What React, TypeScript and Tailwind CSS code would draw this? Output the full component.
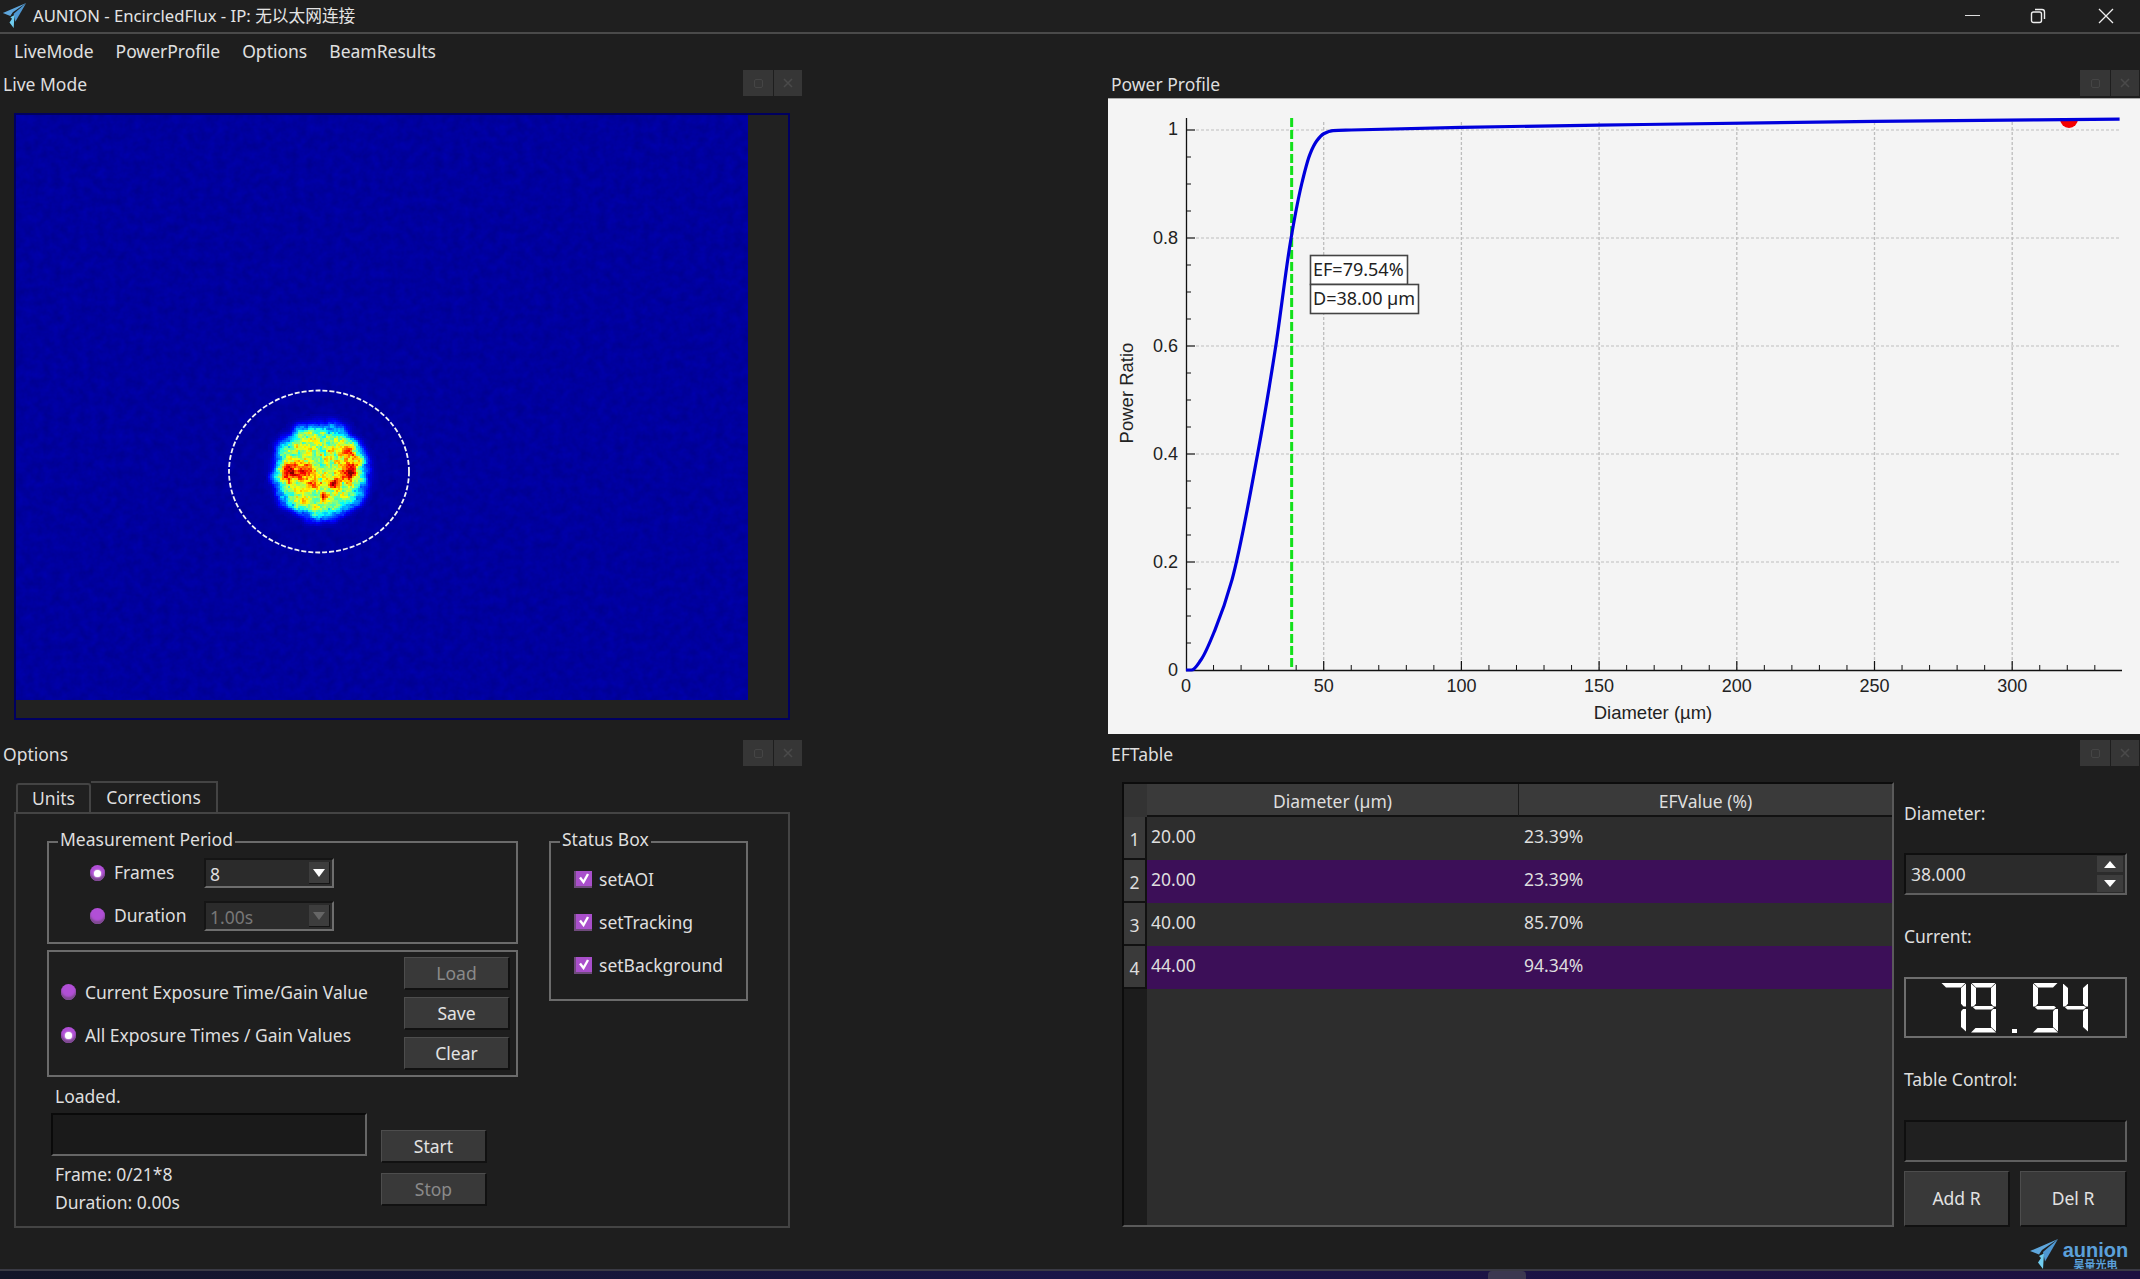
import { useMemo } from 'react'

const jet = (v: number) => {
  const c = (x: number) => Math.max(0, Math.min(1, x))
  const r = c(1.5 - Math.abs(4 * v - 3))
  const g = c(1.5 - Math.abs(4 * v - 2))
  const b = c(1.5 - Math.abs(4 * v - 1))
  return `rgb(${Math.round(r * 255)},${Math.round(g * 255)},${Math.round(b * 255)})`
}

function makeNoise(seed: number, size: number) {
  let s = seed
  const rand = () => {
    s = (s * 16807) % 2147483647
    return s / 2147483647
  }
  const grid: number[] = []
  for (let i = 0; i < size * size; i++) grid.push(rand())
  return (x: number, y: number) => {
    const x0 = Math.floor(x)
    const y0 = Math.floor(y)
    const fx = x - x0
    const fy = y - y0
    const at = (a: number, b: number) => grid[((a + size) % size) + ((b + size) % size) * size]
    const sx = fx * fx * (3 - 2 * fx)
    const sy = fy * fy * (3 - 2 * fy)
    const top = at(x0, y0) * (1 - sx) + at(x0 + 1, y0) * sx
    const bot = at(x0, y0 + 1) * (1 - sx) + at(x0 + 1, y0 + 1) * sx
    return top * (1 - sy) + bot * sy
  }
}

// hot spots of the beam, in page coordinates
const hot = [
  [288, 472, 0.42, 6],
  [303, 470, 0.4, 5],
  [350, 470, 0.44, 6],
  [347, 450, 0.32, 5],
  [358, 458, 0.22, 4],
  [313, 483, 0.28, 3.5],
  [333, 482, 0.32, 4],
  [323, 495, 0.36, 2.5],
  [303, 500, 0.22, 2.5],
]

function BeamCells() {
  const cells = useMemo(() => {
    const noise = makeNoise(4217, 64)
    const noise2 = makeNoise(991, 64)
    const noise3 = makeNoise(2203, 64)
    const out: { x: number; y: number; fill: string }[] = []
    const step = 2
    for (let py = 408; py < 534; py += step) {
      for (let px = 256; px < 384; px += step) {
        const wobble = 0.12 * (noise3(px / 9, py / 9) - 0.5)
        const r = Math.hypot(px - 319, py - 470.5) / 49 + wobble
        if (r > 1.16) continue
        const edge = Math.max(0, Math.min(1, (1.14 - r) / 0.46))
        const prof = edge * edge * (3 - 2 * edge)
        let v = 0.3 + 0.3 * noise(px / 3.6, py / 3.6) + 0.16 * noise2(px / 2, py / 2)
        for (const [hx, hy, amp, w] of hot) {
          v += amp * Math.exp(-((px - hx) ** 2 + (py - hy) ** 2) / (2 * w * w))
        }
        const val = 0.04 + prof * Math.min(1, v) * 0.96
        out.push({ x: px - 16, y: py - 115, fill: jet(val) })
      }
    }
    return out
  }, [])
  return (
    <g filter="url(#soft)">
      {cells.map((c, i) => (
        <rect key={i} x={c.x} y={c.y} width="2.2" height="2.2" fill={c.fill} />
      ))}
    </g>
  )
}

function LiveImage() {
  return (
    <svg width="732" height="585" className="block shrink-0">
      <defs>
        <filter id="grain" x="0" y="0" width="100%" height="100%" colorInterpolationFilters="sRGB">
          <feTurbulence type="fractalNoise" baseFrequency="0.11" numOctaves="3" seed="8" />
          <feColorMatrix values="0 0 0 0 0  0 0 0 0 0  0.14 0 0 0 0.55  0 0 0 0 1" />
        </filter>
        <filter id="soft" colorInterpolationFilters="sRGB">
          <feGaussianBlur stdDeviation="0.7" />
        </filter>
      </defs>
      <rect width="732" height="585" filter="url(#grain)" />
      <BeamCells />
      <ellipse cx="303" cy="356.5" rx="90" ry="81" fill="none" stroke="#f4f4f4" strokeWidth="1.8" strokeDasharray="5 2" />
    </svg>
  )
}

const curve = [
  [0, 0], [2, 0], [5.4, 0.0185], [10.5, 0.074], [16.7, 0.167], [26, 0.4], [32.6, 0.6], [38, 0.795],
  [42, 0.9], [45, 0.955], [47.5, 0.98], [50, 0.993], [53.4, 0.999], [60, 1.0], [100, 1.005], [150, 1.009], [250, 1.016], [339, 1.02],
]

const X = (d: number) => 78 + 2.754 * d
const Y = (v: number) => 572 - 540 * v

// monotone cubic through the read-off points
function curvePath() {
  const n = curve.length
  const sec: number[] = []
  for (let i = 0; i < n - 1; i++) sec.push((curve[i + 1][1] - curve[i][1]) / (curve[i + 1][0] - curve[i][0]))
  const m: number[] = [sec[0]]
  for (let i = 1; i < n - 1; i++) {
    const h0 = curve[i][0] - curve[i - 1][0]
    const h1 = curve[i + 1][0] - curve[i][0]
    const a = sec[i - 1]
    const b = sec[i]
    m.push(a * b <= 0 ? 0 : (3 * (h0 + h1)) / ((2 * h1 + h0) / a + (h1 + 2 * h0) / b))
  }
  m.push(sec[n - 2])
  let out = `M${X(0)} ${Y(0)}`
  for (let i = 0; i < n - 1; i++) {
    const h = curve[i + 1][0] - curve[i][0]
    const c1x = curve[i][0] + h / 3
    const c1y = curve[i][1] + (m[i] * h) / 3
    const c2x = curve[i + 1][0] - h / 3
    const c2y = curve[i + 1][1] - (m[i + 1] * h) / 3
    out += ` C${X(c1x)} ${Y(c1y)} ${X(c2x)} ${Y(c2y)} ${X(curve[i + 1][0])} ${Y(curve[i + 1][1])}`
  }
  return out
}

function PowerChart() {
  const xMajor = [50, 100, 150, 200, 250, 300]
  const xMinor = Array.from({ length: 33 }, (_, i) => (i + 1) * 10).filter(d => d % 50 !== 0)
  const yMajor = [0.2, 0.4, 0.6, 0.8, 1]
  const yMinor = [0.05, 0.1, 0.15, 0.25, 0.3, 0.35, 0.45, 0.5, 0.55, 0.65, 0.7, 0.75, 0.85, 0.9, 0.95]
  const axisText = "font-['Liberation_Sans',sans-serif] text-[18px] fill-[#222]"
  return (
    <svg width="1032" height="636" className="block bg-[#f4f4f4]">
      <line x1="0" x2="1032" y1="0.5" y2="0.5" stroke="#aaa" />
      {xMajor.map(d => (
        <line key={d} x1={X(d)} x2={X(d)} y1="24" y2="572" stroke="#bdbdbd" strokeWidth="1.3" strokeDasharray="3 2" />
      ))}
      {yMajor.map(v => (
        <line key={v} x1="88" x2="1012" y1={Y(v)} y2={Y(v)} stroke="#bdbdbd" strokeWidth="1.1" strokeDasharray="3 2" />
      ))}
      <path d="M78.5 20V572.5H1014" fill="none" stroke="#111" strokeWidth="1.3" />
      {yMajor.map(v => (
        <line key={v} x1="78" x2="87" y1={Y(v)} y2={Y(v)} stroke="#111" strokeWidth="1.2" />
      ))}
      {yMinor.map(v => (
        <line key={v} x1="78" x2="83" y1={Y(v)} y2={Y(v)} stroke="#111" strokeWidth="1" />
      ))}
      {xMajor.map(d => (
        <line key={d} x1={X(d)} x2={X(d)} y1="563" y2="572" stroke="#111" strokeWidth="1.2" />
      ))}
      {xMinor.map(d => (
        <line key={d} x1={X(d)} x2={X(d)} y1="567" y2="572" stroke="#111" strokeWidth="1" />
      ))}
      <line x1={X(38) + 1} x2={X(38) + 1} y1="20" y2="572" stroke="#12e01a" strokeWidth="3" strokeDasharray="9 3" />
      <path d="M952 21a9 9 0 0 0 18 0z" fill="#f40000" />
      <path d={curvePath()} fill="none" stroke="#0000dc" strokeWidth="3.2" />
      {['1', '0.8', '0.6', '0.4', '0.2', '0'].map((t, i) => (
        <text key={t} x="70" y={Y(1 - i * 0.2) + (i === 0 ? 5 : 6)} textAnchor="end" className={axisText}>
          {t}
        </text>
      ))}
      {[0, 50, 100, 150, 200, 250, 300].map(d => (
        <text key={d} x={X(d)} y="594" textAnchor="middle" className={axisText}>
          {d}
        </text>
      ))}
      <text x="545" y="621" textAnchor="middle" className="font-['Liberation_Sans',sans-serif] text-[18.5px] fill-[#222]">
        Diameter (µm)
      </text>
      <text transform="translate(25 295) rotate(-90)" textAnchor="middle" className="font-['Liberation_Sans',sans-serif] text-[18.5px] fill-[#222]">
        Power Ratio
      </text>
      <rect x="202.5" y="157.5" width="97" height="29" fill="#fff" stroke="#444" strokeWidth="1.6" />
      <text x="205" y="178" className="text-[18px] fill-[#222]">
        EF=79.54%
      </text>
      <rect x="202.5" y="186.5" width="108" height="29" fill="#fff" stroke="#444" strokeWidth="1.6" />
      <text x="205" y="207" className="text-[18px] fill-[#222]">
        D=38.00 µm
      </text>
    </svg>
  )
}

function DockHeader({ title, inset = 'pl-[3px]', end = 'pr-0' }: { title: string; inset?: string; end?: string }) {
  return (
    <div className={`h-[30px] flex items-center justify-between ${inset} ${end}`}>
      <span className="pt-[2px] text-[#dedede]">{title}</span>
      <div className="flex gap-[1px]">
        <div className="w-[30px] h-[26px] bg-[#363636] flex items-center justify-center">
          <div className="w-[9px] h-[9px] border border-[#454545] rounded-[2px]" />
        </div>
        <div className="w-[28px] h-[26px] bg-[#363636] flex items-center justify-center">
          <svg width="12" height="12" viewBox="0 0 12 12" stroke="#4a4a4a" strokeWidth="1.6">
            <path d="M2 2l8 8M10 2l-8 8" />
          </svg>
        </div>
      </div>
    </div>
  )
}

function Radio({ checked }: { checked?: boolean }) {
  return (
    <span className="w-[15px] h-[16px] rounded-full bg-[#b14fd6] shadow-[inset_0_-3px_2px_#7d4a8f] flex items-center justify-center shrink-0">
      {checked && <span className="w-[7px] h-[7px] rounded-full bg-white shadow-[0_0_2px_#fff]" />}
    </span>
  )
}

function Check({ label }: { label: string }) {
  return (
    <div className="h-[24px] flex items-center gap-[7px]">
      <span className="w-[18px] h-[17px] bg-[#a94fcb] border-b-2 border-l-2 border-[#6f4a7d] flex items-center justify-center shrink-0">
        <svg width="12" height="12" viewBox="0 0 12 12" fill="none" stroke="#fff" strokeWidth="2.4">
          <path d="M2 5.5l3.5 4.5L10 2" />
        </svg>
      </span>
      <span>{label}</span>
    </div>
  )
}

function Combo({ value, disabled }: { value: string; disabled?: boolean }) {
  return (
    <div className="w-[130px] h-[30px] bg-[#2b2b2b] border-2 border-t-[#151515] border-l-[#151515] border-r-[#6e6e6e] border-b-[#6e6e6e] flex items-center justify-between pr-[2px]">
      <span className={`pl-[4px] pt-[2px] ${disabled ? 'text-[#777]' : 'text-[#dedede]'}`}>{value}</span>
      <span className="w-[21px] h-[22px] bg-[#3d3d3d] border-r border-b border-[#151515] flex items-center justify-center">
        <svg width="12" height="8" viewBox="0 0 12 8">
          <path d="M0 0h12L6 8z" fill={disabled ? '#666' : '#fff'} />
        </svg>
      </span>
    </div>
  )
}

function Btn({ label, disabled, className = 'w-[106px] h-[33px]' }: { label: string; disabled?: boolean; className?: string }) {
  return (
    <div className={`${className} bg-[#393939] border-t border-l border-[#4d4d4d] border-r-2 border-b-2 border-r-[#111] border-b-[#111] flex items-center justify-center ${disabled ? 'text-[#8a8a8a]' : 'text-[#e2e2e2]'}`}>
      {label}
    </div>
  )
}

function Legend({ title }: { title: string }) {
  return <legend className="ml-[9px] px-[2px] h-[24px] leading-[18px] text-[#dedede]">{title}</legend>
}

function OptionsPanel() {
  return (
    <div className="pl-[14px]">
      <div className="mt-[14px] pl-[2px] flex items-end h-[30px]">
        <div className="w-[75px] h-[29px] bg-[#202020] border-2 border-b-0 border-[#444] rounded-t-[3px] flex items-center justify-center text-[#dedede]">
          Units
        </div>
        <div className="w-[127px] h-[31px] bg-[#1e1e1e] border-t-2 border-r-2 border-[#444] flex items-center justify-center text-[#dedede]">
          Corrections
        </div>
      </div>
      <div className="w-[776px] h-[416px] border-2 border-[#444] flex pl-[31px] pt-[16px] gap-[31px] text-[#dedede]">
        <div className="w-[471px] flex flex-col">
          <fieldset className="h-[114px] border-2 border-[#6b6b6b]">
            <Legend title="Measurement Period" />
            <div className="pl-[41px] pt-[4px] flex flex-col gap-[13px]">
              <div className="flex items-center h-[30px]">
                <Radio checked />
                <span className="ml-[9px] w-[90px] -mt-[2px]">Frames</span>
                <Combo value="8" />
              </div>
              <div className="flex items-center h-[30px]">
                <Radio />
                <span className="ml-[9px] w-[90px] -mt-[2px]">Duration</span>
                <Combo value="1.00s" disabled />
              </div>
            </div>
          </fieldset>
          <div className="mt-[6px] h-[127px] border-2 border-[#6b6b6b] flex items-center justify-between pl-[12px] pr-[6px]">
            <div className="flex flex-col gap-[19px]">
              <div className="h-[24px] flex items-center gap-[9px]">
                <Radio />
                <span>Current Exposure Time/Gain Value</span>
              </div>
              <div className="h-[24px] flex items-center gap-[9px]">
                <Radio checked />
                <span>All Exposure Times / Gain Values</span>
              </div>
            </div>
            <div className="flex flex-col gap-[7px]">
              <Btn label="Load" disabled />
              <Btn label="Save" />
              <Btn label="Clear" />
            </div>
          </div>
          <div className="mt-[7px] pl-[4px] flex">
            <div className="w-[316px]">
              <div className="h-[24px] pl-[4px] leading-[24px]">Loaded.</div>
              <div className="mt-[5px] h-[43px] bg-[#1a1a1a] border-2 border-t-[#0a0a0a] border-l-[#0a0a0a] border-r-[#666] border-b-[#666]" />
              <div className="mt-[6px] h-[24px] pl-[4px] leading-[24px]">Frame: 0/21*8</div>
              <div className="mt-[4px] h-[24px] pl-[4px] leading-[24px]">Duration: 0.00s</div>
            </div>
            <div className="ml-[14px] pt-[46px] flex flex-col gap-[10px]">
              <Btn label="Start" />
              <Btn label="Stop" disabled />
            </div>
          </div>
        </div>
        <fieldset className="w-[199px] h-[171px] border-2 border-[#6b6b6b]">
          <Legend title="Status Box" />
          <div className="pl-[23px] pt-[13px] flex flex-col gap-[19px]">
            <Check label="setAOI" />
            <Check label="setTracking" />
            <Check label="setBackground" />
          </div>
        </fieldset>
      </div>
    </div>
  )
}

const rows = [
  ['20.00', '23.39%'],
  ['20.00', '23.39%'],
  ['40.00', '85.70%'],
  ['44.00', '94.34%'],
]

function EFTable() {
  return (
    <div className="w-[772px] h-[445px] bg-[#2d2d2d] border-2 border-t-[#0c0c0c] border-l-[#0c0c0c] border-r-[#5a5a5a] border-b-[#5a5a5a] flex flex-col">
      <div className="flex h-[33px] shrink-0 text-[#dedede]">
        <div className="w-[23px] bg-[#333]" />
        <div className="w-[372px] pt-[3px] bg-[#3a3a3a] border-r border-b-2 border-r-[#1a1a1a] border-b-[#111] flex items-center justify-center">
          Diameter (µm)
        </div>
        <div className="flex-1 pt-[3px] bg-[#3a3a3a] border-b-2 border-[#111] flex items-center justify-center">EFValue (%)</div>
      </div>
      <div className="flex-1 flex flex-col">
        {rows.map((r, i) => (
          <div key={i} className="flex h-[43px] shrink-0">
            <div className="w-[23px] bg-[#3a3a3a] border-b-2 border-r-2 border-[#111] flex items-center justify-center pt-[4px] text-[#dedede]">
              {i + 1}
            </div>
            <div className={`flex flex-1 ${i % 2 === 1 ? 'bg-[#3c0f58]' : 'bg-[#2d2d2d]'}`}>
              <div className="w-[372px] pl-[4px] pb-[4px] flex items-center text-[#dedede]">{r[0]}</div>
              <div className="pl-[5px] pb-[4px] flex items-center text-[#dedede]">{r[1]}</div>
            </div>
          </div>
        ))}
        <div className="flex-1 flex">
          <div className="w-[23px] bg-[#1c1c1c]" />
          <div className="flex-1" />
        </div>
      </div>
    </div>
  )
}

const segA = "absolute left-0 top-0 w-full h-[5px] bg-white [clip-path:polygon(0_0,100%_0,80%_100%,20%_100%)]"
const segB = "absolute right-0 top-[1px] w-[5px] h-[23px] bg-white [clip-path:polygon(100%_0,100%_100%,50%_100%,0_88%,0_20%)]"
const segC = "absolute right-0 bottom-[1px] w-[5px] h-[23px] bg-white [clip-path:polygon(100%_0,100%_100%,0_80%,0_12%,50%_0)]"
const segD = "absolute left-0 bottom-0 w-full h-[5px] bg-white [clip-path:polygon(20%_0,80%_0,100%_100%,0_100%)]"
const segF = "absolute left-0 top-[1px] w-[5px] h-[23px] bg-white [clip-path:polygon(0_0,100%_20%,100%_88%,50%_100%,0_100%)]"
const segG = "absolute left-[2px] right-[2px] top-[23px] h-[4px] bg-white [clip-path:polygon(0_50%,12%_0,88%_0,100%_50%,88%_100%,12%_100%)]"

const digitSegs: Record<string, string[]> = {
  '7': [segA, segB, segC],
  '9': [segA, segB, segC, segD, segF, segG],
  '5': [segA, segC, segD, segF, segG],
  '4': [segB, segC, segF, segG],
}

function Digit({ d }: { d: string }) {
  return (
    <div className="relative w-[25px] h-[50px]">
      {digitSegs[d].map((s, i) => (
        <div key={i} className={s} />
      ))}
    </div>
  )
}

function Lcd() {
  return (
    <div
      aria-label="79.54"
      className="mt-[29px] h-[61px] border-2 border-[#6e6e6e] flex items-center justify-end pr-[37px] gap-[5px]"
    >
      <Digit d="7" />
      <Digit d="9" />
      <div className="w-[27px] h-[50px] flex items-end justify-center">
        <div className="w-[5px] h-[4px] bg-white" />
      </div>
      <Digit d="5" />
      <Digit d="4" />
    </div>
  )
}

function AunionMark({ size }: { size: number }) {
  return (
    <svg width={size} height={size} viewBox="0 0 30 30" className="shrink-0">
      <path d="M29 0L1 12l9 3.5L13 11z" fill="#5ea6dc" />
      <path d="M29 0L14 13l2 9.5z" fill="#4e97d2" />
      <path d="M10 17l5-2.5L14 30 9 23.5 12 19z" fill="#70cdf0" />
    </svg>
  )
}

function SideControls() {
  return (
    <div className="ml-[10px] w-[223px] pt-[33px] text-[#dedede]">
      <div className="h-[24px] leading-[24px]">Diameter:</div>
      <div className="mt-[28px] h-[42px] bg-[#2b2b2b] border-2 border-t-[#0f0f0f] border-l-[#0f0f0f] border-r-[#5f5f5f] border-b-[#5f5f5f] flex items-center justify-between pl-[5px] pr-[2px]">
        <span>38.000</span>
        <div className="flex flex-col gap-[3px]">
          <div className="w-[26px] h-[16px] bg-[#3d3d3d] flex items-center justify-center">
            <svg width="12" height="7" viewBox="0 0 12 7">
              <path d="M0 7h12L6 0z" fill="#fff" />
            </svg>
          </div>
          <div className="w-[26px] h-[17px] bg-[#3d3d3d] flex items-center justify-center">
            <svg width="12" height="7" viewBox="0 0 12 7">
              <path d="M0 0h12L6 7z" fill="#fff" />
            </svg>
          </div>
        </div>
      </div>
      <div className="mt-[29px] h-[24px] leading-[24px]">Current:</div>
      <Lcd />
      <div className="mt-[29px] h-[24px] leading-[24px]">Table Control:</div>
      <div className="mt-[29px] h-[42px] bg-[#202020] border-2 border-t-[#0f0f0f] border-l-[#0f0f0f] border-r-[#5f5f5f] border-b-[#5f5f5f]" />
      <div className="mt-[9px] flex justify-between">
        <Btn label="Add R" className="w-[106px] h-[56px]" />
        <Btn label="Del R" className="w-[107px] h-[56px]" />
      </div>
      <div className="mt-[12px] -mr-[1px] h-[29px] flex justify-end items-start gap-[4px]">
        <AunionMark size={30} />
        <div className="w-[65px] flex flex-col items-center text-[#5ba0da] font-bold">
          <span className="font-['Liberation_Sans',sans-serif] text-[20px] leading-[18px] mt-[2px]">aunion</span>
          <span className="text-[11px] leading-[11px] font-['Noto_Sans_CJK_SC',sans-serif]">昊量光电</span>
        </div>
      </div>
    </div>
  )
}

export default function App() {
  return (
    <div className="w-[2140px] h-[1279px] overflow-hidden flex flex-col bg-[#1e1e1e] text-[#dedede] text-[17.5px] font-['Noto_Sans','Noto_Sans_CJK_SC',sans-serif]">
      <div className="h-[34px] shrink-0 flex items-center justify-between bg-[#1f1f1f] border-b-2 border-[#4a4a4a]">
        <div className="flex items-center">
          <div className="ml-[2px] w-[25px]">
            <AunionMark size={25} />
          </div>
          <span className="ml-[6px] text-[16.7px] text-[#e4e4e4]">AUNION - EncircledFlux - IP: 无以太网连接</span>
        </div>
        <div className="flex items-center">
          <svg width="16" height="16" viewBox="0 0 16 16" stroke="#ddd" className="mr-[49px]">
            <path d="M0 7.5h15" />
          </svg>
          <svg width="16" height="16" viewBox="0 0 16 16" fill="none" stroke="#eee" strokeWidth="1.4" className="mr-[52px]">
            <rect x="1.5" y="4" width="10" height="10.5" rx="2" />
            <path d="M5 1.5h7a2.5 2.5 0 0 1 2.5 2.5v7" />
          </svg>
          <svg width="16" height="16" viewBox="0 0 16 16" stroke="#eee" strokeWidth="1.3" className="mr-[26px]">
            <path d="M1 1l14 14M15 1L1 15" />
          </svg>
        </div>
      </div>
      <div className="h-[34px] shrink-0 flex items-center pl-[14px] gap-[22px] text-[#e0e0e0]">
        <span>LiveMode</span>
        <span>PowerProfile</span>
        <span>Options</span>
        <span>BeamResults</span>
      </div>
      <div className="flex-1 grid grid-cols-[802px_306px_1032px] grid-rows-[670px_531px]">
        <div>
          <DockHeader title="Live Mode" />
          <div className="ml-[14px] mt-[15px] w-[776px] h-[607px] border-2 border-[#000060] bg-[#212121]">
            <LiveImage />
          </div>
        </div>
        <div />
        <div>
          <DockHeader title="Power Profile" inset="pl-[3px]" end="pr-[1px]" />
          <PowerChart />
        </div>
        <div>
          <DockHeader title="Options" />
          <OptionsPanel />
        </div>
        <div />
        <div>
          <DockHeader title="EFTable" inset="pl-[3px]" end="pr-[1px]" />
          <div className="ml-[14px] mt-[14px] flex items-start">
            <EFTable />
            <div className="-mt-[14px]">
              <SideControls />
            </div>
          </div>
        </div>
      </div>
      <div className="h-[10px] shrink-0 border-t-2 border-[#3a3a44] bg-gradient-to-r from-[#131528] via-[#1a1548] to-[#1d1040] flex pl-[1488px]">
        <div className="w-[38px] h-[8px] rounded-t-[4px] bg-[#3c3850]" />
      </div>
    </div>
  )
}
